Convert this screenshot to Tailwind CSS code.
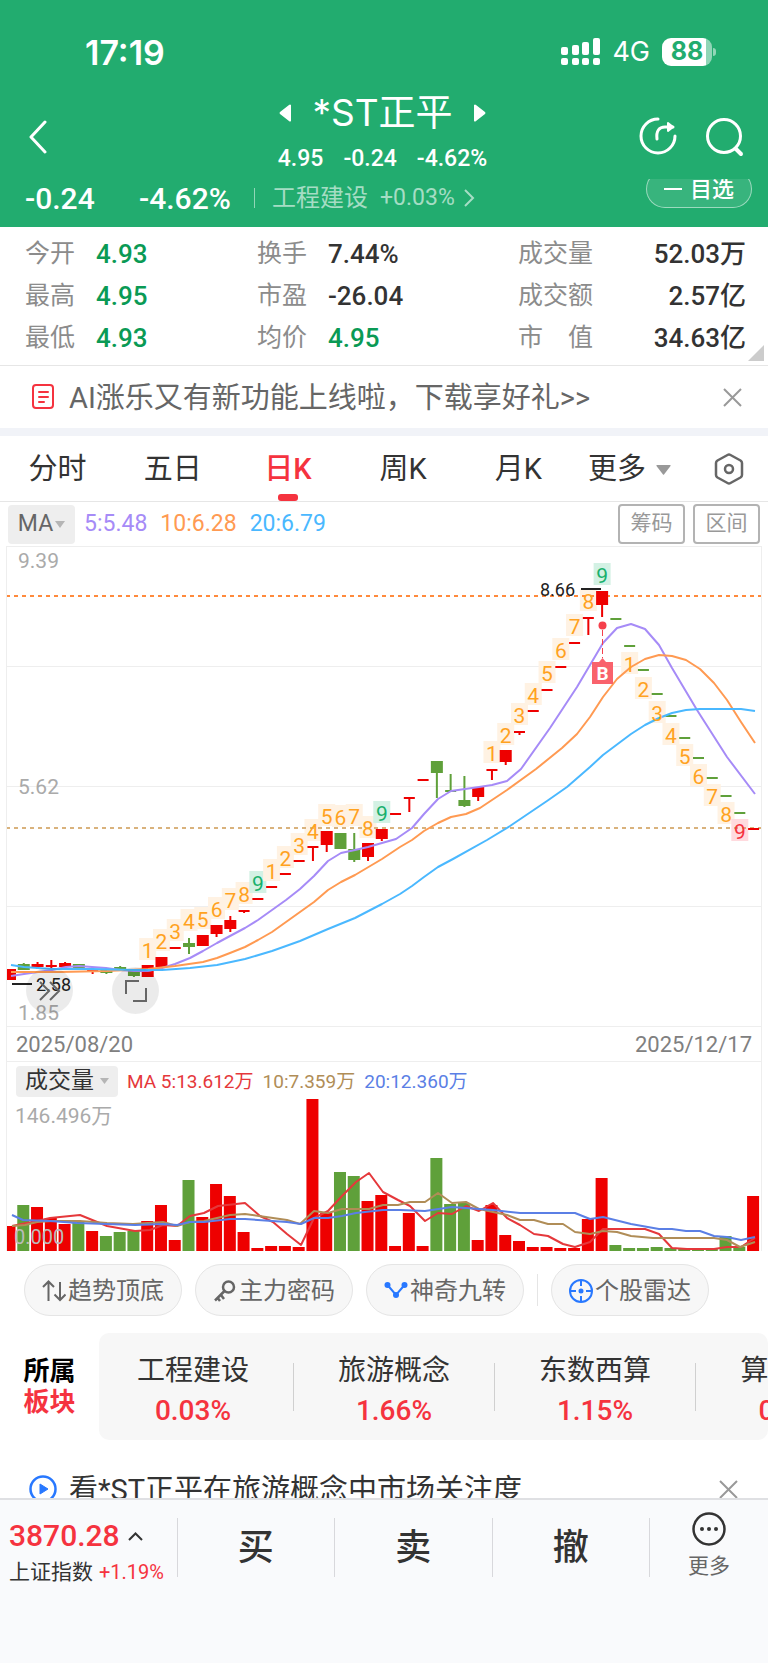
<!DOCTYPE html>
<html lang="zh-CN">
  <head>
    <meta charset="UTF-8" />
    <meta name="viewport" content="width=device-width, initial-scale=1.0" />
    <script src="https://cdn.jsdelivr.net/npm/@tailwindcss/browser@4"></script>
    <title>*ST正平</title>
  </head>
  <body class="flex h-screen flex-col overflow-hidden bg-white font-[Roboto,'Noto_Sans_CJK_SC',sans-serif] text-[#333]">
    <header class="shrink-0 bg-[#22ac6f] text-white">
      <!-- status bar -->
      <div class="flex h-[92px] items-center justify-between pt-3 pr-[52px] pl-[85px] font-[Inter,sans-serif]">
        <span class="text-[34px] font-semibold">17:19</span>
        <div class="flex items-center gap-3">
          <svg width="39" height="28" viewBox="0 0 39 28" fill="currentColor">
            <rect x="0" y="9" width="7" height="8" rx="2" />
            <rect x="11" y="7" width="7" height="10" rx="2" />
            <rect x="21" y="4" width="7" height="13" rx="2" />
            <rect x="32" y="0" width="7" height="17" rx="2" />
            <rect x="0" y="20" width="7" height="7" rx="2" />
            <rect x="11" y="20" width="7" height="7" rx="2" />
            <rect x="21" y="20" width="7" height="7" rx="2" />
            <rect x="32" y="20" width="7" height="7" rx="2" />
          </svg>
          <span class="text-[27px]">4G</span>
          <div class="flex items-center gap-px">
            <div class="flex h-7 w-[50px] items-center justify-center rounded-[9px] bg-linear-to-r from-white from-88% to-white/50 to-88% text-[25px] font-bold text-[#22ac6f]">88</div>
            <div class="h-2 w-[3px] rounded-r-full bg-white/50"></div>
          </div>
        </div>
      </div>

      <!-- title bar -->
      <div class="flex h-[87px] items-start justify-between pr-6 pl-[29px]">
        <button class="w-[97px] pt-7" aria-label="返回">
          <svg width="18" height="34" viewBox="0 0 18 34" fill="none" stroke="currentColor" stroke-width="3" stroke-linecap="round" stroke-linejoin="round">
            <path d="M16 2 2 17l14 15" />
          </svg>
        </button>
        <div class="flex flex-col items-center gap-[14px] pt-px">
          <div class="flex h-10 items-center gap-5">
            <button aria-label="上一只">
              <svg width="13" height="18" viewBox="0 0 13 18" fill="currentColor"><path d="M12 1v16q-1 1-2 0L1 10q-1-1 0-2L10 1q1-1 2 0z" /></svg>
            </button>
            <h1 class="font-[Inter,'Noto_Sans_CJK_SC',sans-serif] text-[37px] leading-10">*ST正平</h1>
            <button aria-label="下一只">
              <svg width="13" height="18" viewBox="0 0 13 18" fill="currentColor"><path d="M1 1v16q1 1 2 0l9-7q1-1 0-2L3 1Q2 0 1 1z" /></svg>
            </button>
          </div>
          <div class="flex gap-5 text-[23px] leading-6 font-medium">
            <span>4.95</span><span>-0.24</span><span>-4.62%</span>
          </div>
        </div>
        <div class="flex gap-[29px] pt-[25px]">
          <button aria-label="分享">
            <svg width="38" height="40" viewBox="0 0 38 40" fill="none" stroke="currentColor" stroke-width="3" stroke-linecap="round" stroke-linejoin="round">
              <path d="M19 2A17 17 0 1 0 36 19" />
              <path d="M18 22c-1-8 2-12 8-12h8" />
              <path d="m29 6 5 4-5 4z" fill="currentColor" stroke-width="2" />
            </svg>
          </button>
          <button aria-label="搜索">
            <svg width="38" height="40" viewBox="0 0 38 40" fill="none" stroke="currentColor" stroke-width="3" stroke-linecap="round">
              <circle cx="18" cy="19" r="16.500" />
              <path d="m30 32 5 5" stroke-width="4" />
            </svg>
          </button>
        </div>
      </div>

      <!-- change / industry -->
      <div class="flex h-12 items-center justify-between overflow-hidden pr-4 pb-[10px] pl-[25px]">
        <div class="flex items-center">
          <span class="w-[114px] text-[30px] font-medium">-0.24</span>
          <span class="w-[115px] text-[30px] font-medium">-4.62%</span>
          <a href="#" class="flex items-center text-white/60">
            <span class="mr-[17px] h-5 w-px bg-white/50"></span>
            <span class="mr-3 text-2xl">工程建设</span>
            <span class="mr-2 text-[23px]">+0.03%</span>
            <svg width="12" height="18" viewBox="0 0 12 18" fill="none" stroke="currentColor" stroke-width="2"><path d="m2 1 8 8-8 8" /></svg>
          </a>
        </div>
        <button class="-mt-[9px] flex h-[38px] w-[106px] items-center justify-center gap-2 self-start rounded-full border border-white/50 bg-white/10 text-[22px] font-medium">
          <span class="h-0.5 w-[18px] bg-white"></span>目选
        </button>
      </div>
    </header>

    <main class="min-h-0 flex-1 overflow-hidden">
      <!-- quote numbers -->
      <section class="relative border-b border-[#e6e6e6] py-1.5">
        <dl class="grid grid-cols-[232fr_261fr_228fr] pr-[22px] pl-[25px] text-[26px] leading-[42px] font-medium">
          <div class="flex"><dt class="w-[71px] text-[25px] font-normal text-[#8c8c8c]">今开</dt><dd class="text-[#0a9a55]">4.93</dd></div>
          <div class="flex"><dt class="w-[71px] text-[25px] font-normal text-[#8c8c8c]">换手</dt><dd>7.44%</dd></div>
          <div class="flex justify-between"><dt class="text-[25px] font-normal text-[#8c8c8c]">成交量</dt><dd>52.03万</dd></div>
          <div class="flex"><dt class="w-[71px] text-[25px] font-normal text-[#8c8c8c]">最高</dt><dd class="text-[#0a9a55]">4.95</dd></div>
          <div class="flex"><dt class="w-[71px] text-[25px] font-normal text-[#8c8c8c]">市盈</dt><dd>-26.04</dd></div>
          <div class="flex justify-between"><dt class="text-[25px] font-normal text-[#8c8c8c]">成交额</dt><dd>2.57亿</dd></div>
          <div class="flex"><dt class="w-[71px] text-[25px] font-normal text-[#8c8c8c]">最低</dt><dd class="text-[#0a9a55]">4.93</dd></div>
          <div class="flex"><dt class="w-[71px] text-[25px] font-normal text-[#8c8c8c]">均价</dt><dd class="text-[#0a9a55]">4.95</dd></div>
          <div class="flex justify-between"><dt class="text-[25px] font-normal text-[#8c8c8c]">市　值</dt><dd>34.63亿</dd></div>
        </dl>
        <svg class="absolute right-1 bottom-1" width="16" height="16" viewBox="0 0 16 16" fill="#ccc"><path d="M16 0v16H0z" /></svg>
      </section>

      <!-- notice -->
      <div class="flex h-[62px] items-center pr-[26px] pl-8">
        <svg class="mr-[15px]" width="22" height="26" viewBox="0 0 22 26" fill="none" stroke="#f5333f" stroke-width="2" stroke-linecap="round">
          <rect x="1" y="1" width="20" height="23" rx="3" />
          <path d="M7 8h9M7 13h9M7 18h5" />
        </svg>
        <a href="#" class="flex-1 pt-1 text-[29px] text-[#666]">AI涨乐又有新功能上线啦，下载享好礼&gt;&gt;</a>
        <button aria-label="关闭">
          <svg width="19" height="19" viewBox="0 0 19 19" stroke="#999" stroke-width="2"><path d="m1 1 17 17M18 1 1 18" /></svg>
        </button>
      </div>
      <div class="h-2 bg-[#f1f3f8]"></div>

      <!-- period tabs -->
      <nav class="flex h-[66px] items-center border-b border-[#e6e6e6] text-[29px]">
        <button class="h-full w-[15%] pt-0.5">分时</button>
        <button class="h-full w-[15%] pt-0.5">五日</button>
        <button class="relative h-full w-[15%] pt-0.5 font-medium text-[#f5333f]">日K<span class="absolute bottom-0 left-1/2 h-[7px] w-5 -translate-x-1/2 rounded-[3px] bg-[#f5333f]"></span></button>
        <button class="h-full w-[15%] pt-0.5">周K</button>
        <button class="h-full w-[15%] pt-0.5">月K</button>
        <button class="ml-3 flex h-full items-center gap-[10px] pt-0.5">
          更多
          <svg width="15" height="10" viewBox="0 0 15 10" fill="#999"><path d="M1 0h13q1 0 .5 1L8 9.500q-.5.5-1 0L.5 1Q0 0 1 0z" /></svg>
        </button>
        <button class="mr-6 ml-auto" aria-label="设置">
          <svg width="30" height="32" viewBox="0 0 30 32" fill="none" stroke="#666" stroke-width="2.500" stroke-linejoin="round">
            <path d="M13.500 2q1.500-.8 3 0l10 5.500q1.500 1 1.500 2.500v12q0 1.500-1.500 2.500l-10 5.500q-1.500.8-3 0l-10-5.500Q2 23.500 2 22V10q0-1.500 1.500-2.500z" />
            <circle cx="15" cy="16" r="4" />
          </svg>
        </button>
      </nav>

      <!-- price chart -->
      <div class="flex h-11 items-center gap-[13px] px-2 text-[23px]">
        <button class="-mr-1 flex h-[39px] w-[67px] items-center justify-center gap-0.5 rounded bg-[#eee] text-[#666]">
          MA
          <svg width="10" height="7" viewBox="0 0 10 7" fill="#b5b5b5"><path d="M0 0h10L5 7z" /></svg>
        </button>
        <span class="text-[#a68bf7]">5:5.48</span>
        <span class="text-[#ff9a52]">10:6.28</span>
        <span class="text-[#4ab8ff]">20:6.79</span>
        <div class="ml-auto flex gap-2 text-[21px] text-[#999]">
          <button class="h-10 w-[67px] rounded border-2 border-[#b3b3b3]">筹码</button>
          <button class="h-10 w-[67px] rounded border-2 border-[#b3b3b3]">区间</button>
        </div>
      </div>
      <div class="mx-1.5 border-x border-[#eee]">
        <div class="relative">
          <svg id="kline" class="block w-full" viewBox="7 546 754 480"></svg>
          <button class="absolute bottom-3 left-[19px] flex size-[47px] items-center justify-center rounded-full bg-black/8" aria-label="快进">
            <svg width="22" height="22" viewBox="0 0 22 22" fill="none" stroke="#666" stroke-width="2"><path d="m1 2 9 9-9 9M11 2l9 9-9 9" /></svg>
          </button>
          <button class="absolute bottom-3 left-[105px] flex size-[47px] items-center justify-center rounded-full bg-black/8" aria-label="全屏">
            <svg width="22" height="22" viewBox="0 0 22 22" fill="none" stroke="#666" stroke-width="2"><path d="M14 1H1v13M8 21h13V8" /></svg>
          </button>
        </div>
        <div class="flex h-9 items-center justify-between border-y border-[#eee] px-[9px] text-[22px] text-[#808080]">
          <time>2025/08/20</time>
          <time>2025/12/17</time>
        </div>

        <!-- volume chart -->
        <div class="flex h-9 items-center gap-[9px] pt-0.5 pl-[9px] text-[19px]">
          <button class="flex h-[31px] w-[102px] items-center justify-center gap-1.5 rounded bg-[#eee] text-[23px]">
            成交量
            <svg width="9" height="6" viewBox="0 0 9 6" fill="#b5b5b5"><path d="M0 0h9L4.500 6z" /></svg>
          </button>
          <span class="pt-0.5 text-[#e5383b]">MA 5:13.612万</span>
          <span class="pt-0.5 text-[#b08d57]">10:7.359万</span>
          <span class="pt-0.5 text-[#5b7fe5]">20:12.360万</span>
        </div>
        <svg id="volume" class="block w-full" viewBox="7 1098 754 153"></svg>
      </div>

      <!-- indicator shortcuts -->
      <div class="flex items-center gap-[13px] pt-[13px] pl-6 text-2xl text-[#666]">
        <button class="flex h-[52px] w-[158px] items-center justify-center gap-0.5 rounded-full border border-[#e5e5e5] bg-[#f7f7f7] pt-0.5">
          <svg width="24" height="24" viewBox="0 0 24 24" fill="none" stroke="#666" stroke-width="2"><path d="M6.500 22V3M1 8l5.500-5.500L12 8M18 3v18M12.500 15.500 18 21l5.500-5.500" /></svg>
          趋势顶底
        </button>
        <button class="flex h-[52px] w-[158px] items-center justify-center gap-0.5 rounded-full border border-[#e5e5e5] bg-[#f7f7f7] pt-0.5">
          <svg width="24" height="24" viewBox="0 0 24 24" fill="none" stroke="#666" stroke-width="2.500"><circle cx="15.500" cy="8" r="5.500" /><path d="M11.500 12 2 21.500M8 16l3 4M4 18l3 4" /></svg>
          主力密码
        </button>
        <button class="flex h-[52px] w-[158px] items-center justify-center gap-0.5 rounded-full border border-[#e5e5e5] bg-[#f7f7f7] pt-0.5">
          <svg width="24" height="24" viewBox="0 0 24 24" fill="#2878ff"><path d="m3.500 6 8.500 10 8.500-10" fill="none" stroke="#2878ff" stroke-width="2" /><circle cx="3.500" cy="6" r="3" /><circle cx="12" cy="16" r="3" /><circle cx="20.500" cy="6" r="3" /></svg>
          神奇九转
        </button>
        <span class="h-8 w-px bg-[#e5e5e5]"></span>
        <button class="flex h-[52px] w-[158px] items-center justify-center gap-0.5 rounded-full border border-[#e5e5e5] bg-[#f7f7f7] pt-0.5">
          <svg width="24" height="24" viewBox="0 0 24 24" fill="none" stroke="#2878ff" stroke-width="2"><circle cx="12" cy="12" r="11" /><path d="M12 1v6M12 17v6M1 12h6M17 12h6" /><circle cx="12" cy="12" r="1.500" fill="#2878ff" /></svg>
          个股雷达
        </button>
      </div>

      <!-- sectors -->
      <section class="mt-[17px] flex h-[107px] items-center">
        <h2 class="w-[99px] shrink-0 text-center text-[26px] leading-[31px] font-bold text-black">所属<br /><span class="text-[#f5333f]">板块</span></h2>
        <ul class="flex h-full min-w-0 flex-1 items-center overflow-hidden rounded-[10px] bg-[#f7f7f7] text-center text-[28px] leading-10">
          <li class="w-[195px] shrink-0 border-r border-[#d0d0d0] pr-1.5">
            <a href="#" class="-mt-3 -mb-5 block">工程建设<br /><span class="font-medium text-[#f5333f]">0.03%</span></a>
          </li>
          <li class="w-[201px] shrink-0 border-r border-[#d0d0d0]">
            <a href="#" class="-mt-3 -mb-5 block">旅游概念<br /><span class="font-medium text-[#f5333f]">1.66%</span></a>
          </li>
          <li class="w-[201px] shrink-0 border-r border-[#d0d0d0]">
            <a href="#" class="-mt-3 -mb-5 block">东数西算<br /><span class="font-medium text-[#f5333f]">1.15%</span></a>
          </li>
          <li class="w-[201px] shrink-0">
            <a href="#" class="-mt-3 -mb-5 block">算力概念<br /><span class="font-medium text-[#f5333f]">0.84%</span></a>
          </li>
        </ul>
      </section>

      <div class="flex h-[98px] items-center pr-[30px] pl-[29px]">
        <svg class="mr-3" width="28" height="28" viewBox="0 0 28 28"><circle cx="14" cy="14" r="12.500" fill="none" stroke="#2878ff" stroke-width="2.500" /><path d="M11 9v10l8-5z" fill="#2878ff" stroke="#2878ff" stroke-linejoin="round" /></svg>
        <a href="#" class="flex-1 pt-1 text-[29px]">看*ST正平在旅游概念中市场关注度</a>
        <button aria-label="关闭">
          <svg width="19" height="19" viewBox="0 0 19 19" stroke="#999" stroke-width="2"><path d="m1 1 17 17M18 1 1 18" /></svg>
        </button>
      </div>
    </main>

    <footer class="flex h-[165px] shrink-0 items-start border-t-2 border-[#dfe0e3] bg-[#f9fafc] pt-[18px]">
      <a href="#" class="flex w-[23%] flex-col pl-[9px]">
        <span class="flex items-center gap-2 text-[30px] leading-9 font-medium text-[#f5333f]">
          3870.28
          <svg width="15" height="9" viewBox="0 0 15 9" fill="none" stroke="#333" stroke-width="2"><path d="m1 8 6.500-6.500L14 8" /></svg>
        </span>
        <span class="flex items-center gap-1.5 text-[21px] leading-9">上证指数 <span class="text-xl text-[#f5333f]">+1.19%</span></span>
      </a>
      <button class="h-[59px] flex-1 border-l border-[#d8d8dc] text-[36px] font-medium">买</button>
      <button class="h-[59px] flex-1 border-l border-[#d8d8dc] text-[36px] font-medium">卖</button>
      <button class="h-[59px] flex-1 border-x border-[#d8d8dc] text-[36px] font-medium">撤</button>
      <button class="-mt-[6px] flex w-[118px] flex-col items-center gap-1.5 text-[21px] leading-7 text-[#666]">
        <svg width="34" height="34" viewBox="0 0 34 34" fill="#333"><circle cx="17" cy="17" r="15.500" fill="none" stroke="#333" stroke-width="2.500" /><circle cx="10" cy="17" r="2" /><circle cx="17" cy="17" r="2" /><circle cx="24" cy="17" r="2" /></svg>
        更多
      </button>
    </footer>

    <script>
      const RED = "#ee0000";
      const GREEN = "#5fa03a";
      const x = (i) => 10 + 13.77 * i;

      // [color, body top, body bottom, wick top, wick bottom]
      const candles = [
        ["r", 969, 980], ["g", 964, 970, 963, 970], ["r", 964, 967, 962, 969], ["r", 965, 967, 960, 968],
        ["r", 963, 967, 962, 968], ["g", 964, 969], ["r", 969, 971, 969, 974], ["g", 970, 973, 970, 974],
        ["g", 967, 971, 966, 971], ["g", 971, 976, 971, 977], ["r", 965, 977], ["r", 957, 967, 957, 971],
        ["r", 947, 949], ["g", 943, 947, 938, 954], ["r", 935, 946], ["r", 925, 934, 925, 937],
        ["r", 920, 929, 916, 932], ["r", 910, 912, 910, 913], ["r", 898, 900], ["r", 886, 888],
        ["r", 873, 875], ["r", 860, 862], ["r", 846, 848, 846, 861], ["r", 831, 845, 831, 852],
        ["g", 833, 849], ["g", 849, 860, 833, 862], ["r", 843, 857, 843, 861], ["r", 829, 839, 829, 841],
        ["r", 813, 815], ["r", 797, 799, 797, 812], ["r", 779, 781], ["g", 761, 773, 761, 798],
        ["g", 790, 792, 774, 792], ["g", 800, 806, 776, 807], ["r", 787, 797, 787, 801], ["r", 769, 771, 769, 780],
        ["r", 750, 762, 750, 765], ["r", 731, 733, 731, 735], ["r", 710, 712], ["r", 689, 691],
        ["r", 666, 668], ["r", 642, 644], ["r", 617, 619, 617, 635], ["r", 591, 605, 591, 617],
        ["g", 618, 620], ["g", 645, 647], ["g", 669, 671], ["g", 693, 695], ["g", 715, 717],
        ["g", 737, 739], ["g", 757, 759], ["g", 777, 779], ["g", 795, 797], ["g", 812, 814], ["r", 828, 830],
      ];

      // nine-turn marks: [candle, digit, y]
      const marks = [
        [10, 1, 949], [11, 2, 940], [12, 3, 930], [13, 4, 920], [14, 5, 918], [15, 6, 908], [16, 7, 899], [17, 8, 893], [18, 9, 882],
        [19, 1, 870], [20, 2, 857], [21, 3, 844], [22, 4, 830], [23, 5, 815], [24, 6, 816], [25, 7, 815], [26, 8, 827], [27, 9, 812],
        [35, 1, 752], [36, 2, 734], [37, 3, 714], [38, 4, 694], [39, 5, 672], [40, 6, 649], [41, 7, 625], [42, 8, 600], [43, 9, 574],
        [45, 1, 663], [46, 2, 688], [47, 3, 712], [48, 4, 734], [49, 5, 755], [50, 6, 775], [51, 7, 795], [52, 8, 813], [53, 9, 830],
      ];

      const priceLines = {
        "#a68bf7": "11,976 24,974 38,972 52,970 66,967 79,966 92,967 106,968 120,970 134,971 148,971 162,968 175,964 190,958 203,951 217,943 230,936 245,928 258,920 272,910 286,900 300,889 314,876 328,861 341,853 355,850 368,847 382,843 396,839 412,828 424,814 438,799 451,791 465,789 479,787 492,785 507,781 521,769 550,728 577,687 603,643 617,628 631,624 645,629 659,645 672,668 697,710 727,757 755,794",
        "#ff9a52": "11,972 60,972 107,971 148,969 175,966 203,962 217,958 230,953 245,947 258,940 272,932 286,922 314,902 328,890 341,882 355,875 382,859 400,847 412,840 424,831 438,823 451,817 466,814 480,808 507,790 536,769 562,748 577,734 590,717 603,697 617,679 631,667 645,659 659,655 672,656 686,660 700,669 714,683 727,700 741,722 755,743",
        "#4ab8ff": "11,965 24,967 38,968 52,969 92,969 134,970 162,970 190,968 217,965 245,959 272,951 300,941 328,929 355,918 382,904 400,894 412,886 424,877 438,867 453,859 487,840 510,826 547,801 567,787 590,767 603,755 631,734 645,725 659,718 672,713 686,710 700,709 741,709 755,711",
      };

      // top of every volume bar
      const volumes = [
        1226, 1205, 1207, 1218, 1224, 1222, 1231, 1236, 1232, 1231, 1221, 1205, 1240, 1180, 1217, 1184, 1196, 1232, 1248,
        1246, 1246, 1247, 1099, 1213, 1172, 1176, 1201, 1195, 1246, 1213, 1246, 1158, 1204, 1203, 1240, 1205, 1235, 1241,
        1247, 1247, 1248, 1248, 1219, 1178, 1245, 1248, 1248, 1247, 1248, 1249, 1249, 1249, 1236, 1247, 1196,
      ];

      const volumeLines = {
        "#e5383b": "12,1226 37,1221 50,1218 80,1215 107,1226 135,1231 150,1230 163,1225 177,1226 190,1216 204,1213 218,1206 245,1203 260,1216 273,1222 287,1234 301,1245 314,1218 328,1211 342,1196 356,1182 369,1173 383,1192 398,1200 410,1206 425,1221 438,1213 452,1214 466,1206 479,1211 493,1203 507,1218 520,1225 534,1234 548,1236 563,1244 575,1247 590,1242 603,1229 645,1229 659,1234 672,1248 687,1249 714,1249 727,1247 741,1247 750,1241 755,1238",
        "#b08d57": "12,1226 25,1225 37,1222 52,1221 80,1221 107,1223 133,1224 163,1222 177,1226 190,1222 204,1221 230,1215 245,1214 273,1218 287,1220 300,1224 314,1211 328,1213 342,1209 369,1209 383,1205 398,1205 410,1202 425,1202 438,1193 452,1203 466,1202 479,1209 507,1215 520,1220 534,1220 548,1224 563,1224 575,1232 590,1234 603,1231 617,1232 631,1236 653,1238 714,1238 727,1240 740,1247 755,1242",
        "#5b7fe5": "12,1215 23,1220 50,1221 77,1223 135,1225 163,1224 177,1225 190,1222 204,1222 230,1219 245,1219 287,1222 301,1224 314,1218 328,1218 342,1216 356,1213 383,1210 400,1210 425,1211 452,1207 479,1209 493,1210 520,1213 575,1213 590,1219 603,1217 631,1224 659,1229 672,1229 686,1231 700,1231 714,1236 727,1237 741,1240 755,1237",
      };

      const rect = (x, y, w, h, fill) => `<rect x="${x}" y="${y}" width="${w}" height="${h}" fill="${fill}"/>`;
      const text = (x, y, size, fill, value, extra = "") => `<text x="${x}" y="${y}" font-size="${size}" fill="${fill}" ${extra}>${value}</text>`;
      const lines = (set) =>
        Object.entries(set)
          .map(([color, points]) => `<polyline points="${points}" fill="none" stroke="${color}" stroke-width="2" stroke-linejoin="round"/>`)
          .join("");

      let kline = "";
      [546, 666, 786, 906].forEach((y) => (kline += rect(6, y, 756, 1, "#eee")));
      kline += text(18, 568, 21, "#aaa", "9.39") + text(18, 794, 21, "#aaa", "5.62") + text(18, 1020, 21, "#aaa", "1.85");

      marks.forEach(([i, digit, y]) => {
        let bg = "#fff2e3";
        if (digit === 9) bg = i === 53 ? "#ffdade" : "#d3f1e4";
        kline += rect(x(i) - 8.5, y - 11, 17, 22, bg);
      });
      kline += `<path d="M6 596h756" stroke="#ff8a3c" stroke-width="2" stroke-dasharray="4 4"/>`;
      kline += `<path d="M6 828h756" stroke="#d9b27c" stroke-width="2" stroke-dasharray="4 4"/>`;

      candles.forEach(([type, top, bottom, high, low], i) => {
        const color = type === "r" ? RED : GREEN;
        const w = bottom - top > 2 ? 12 : 11;
        kline += rect(x(i) - w / 2, top, w, bottom - top, color);
        if (low) kline += rect(x(i) - 1, high, 2, low - high, color);
      });
      kline += lines(priceLines);

      marks.forEach(([i, digit, y]) => {
        let color = "#ffa21f";
        if (digit === 9) color = i === 53 ? "#f5333f" : "#18b06c";
        kline += text(x(i), y + 9, 21, color, digit, 'text-anchor="middle"');
      });

      // high / low of the range
      kline += text(540, 596, 18, "#222", "8.66") + rect(581, 588, 20, 2, "#222");
      kline += text(36, 991, 18, "#222", "2.58") + rect(12, 983, 20, 2, "#222");

      // buy point
      kline += `<circle cx="602.500" cy="625.500" r="4" fill="#f5404c"/>`;
      kline += `<path d="M602.500 630v28" stroke="#f5404c" stroke-dasharray="6 3"/>`;
      kline += `<path d="M592 662h7l3.500-4 3.500 4h7v22h-21z" fill="#f9626c"/>`;
      kline += text(602.5, 680, 19, "#fff", "B", 'text-anchor="middle" font-weight="700"');
      document.getElementById("kline").innerHTML = kline;

      let volume = "";
      volumes.forEach((top, i) => {
        volume += rect(x(i) - 6.5, top, 12, 1251 - top, candles[i][0] === "r" ? RED : GREEN);
      });
      volume += text(15, 1123, 21, "#aaa", "146.496万") + text(14, 1244, 20, "#bbb", "0.000");
      volume += lines(volumeLines);
      document.getElementById("volume").innerHTML = volume;
    </script>
  </body>
</html>
